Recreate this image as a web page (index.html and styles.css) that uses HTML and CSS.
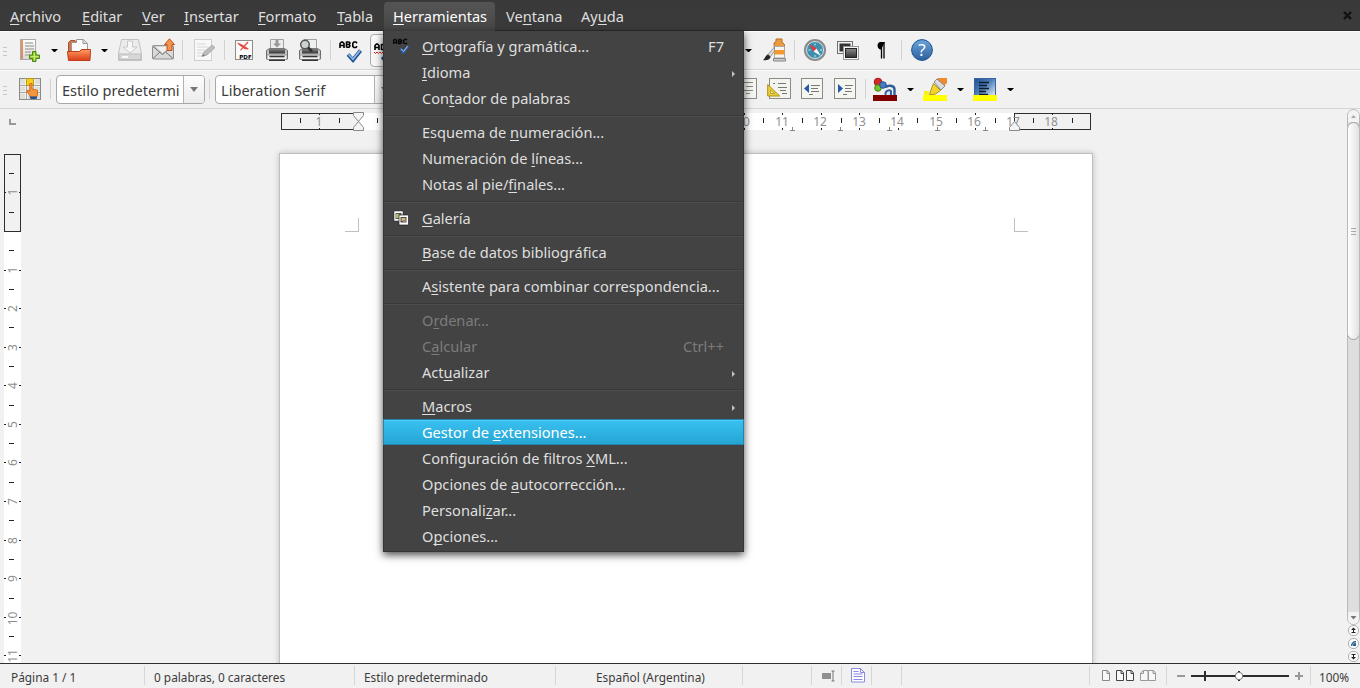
FILE: index.html
```html
<!DOCTYPE html>
<html lang="es">
<head>
<meta charset="utf-8">
<title>Writer</title>
<link rel="stylesheet" href="styles.css">
</head>
<body>
<nav class="menubar">
  <span class="menu m1"><u>A</u>rchivo</span>
  <span class="menu m2"><u>E</u>ditar</span>
  <span class="menu m3"><u>V</u>er</span>
  <span class="menu m4"><u>I</u>nsertar</span>
  <span class="menu m5"><u>F</u>ormato</span>
  <span class="menu m6"><u>T</u>abla</span>
  <div class="menu open"><u>H</u>erramientas
    <div class="popup">
      <div class="item">
        <svg class="mi" width="16" height="16" viewBox="0 0 16 16"><path d="M.5 6V2.500l1-1h1l1 1V6M.5 4.500h3M5.500 1.500V6M5.500 1.500h2l1 1-1 1h-2M7.500 3.500l1 1-1 1h-2M14 2l-.5-.5h-2l-1 1v2l1 1h2l.5-.5" fill="none" stroke="#080808" stroke-width="1.400"/><path d="M7.500 11l3 3.200 4.500-6" fill="none" stroke="#2d5fab" stroke-width="2.600"/><path d="M8 10.800l2.600 2.600 4-5.200" fill="none" stroke="#a9c7ee" stroke-width="1"/></svg>
        <span><u>O</u>rtografía y gramática...</span><kbd>F7</kbd></div>
      <div class="item sub"><span><u>I</u>dioma</span></div>
      <div class="item"><span>Con<u>t</u>ador de palabras</span></div>
      <hr>
      <div class="item"><span>Esquema de <u>n</u>umeración...</span></div>
      <div class="item"><span>Numeración de <u>l</u>íneas...</span></div>
      <div class="item"><span>Notas al pie/<u>f</u>inales...</span></div>
      <hr>
      <div class="item">
        <svg class="mi" width="16" height="16" viewBox="0 0 16 16"><rect x="1" y="1" width="9" height="10" fill="#fff" stroke="#222" stroke-width=".5"/><path d="M2.500 3h6v6h-6z" fill="#55564a"/><path d="M3 4h3v4H3z" fill="#bdb777"/><rect x="6" y="5" width="9.500" height="10" fill="#fff" stroke="#222" stroke-width=".7"/><path d="M7.500 7h6v5.500h-6z" fill="#484848"/><path d="M8.500 8h4v3h-4z" fill="#c9b96e"/><path d="M10 10h3v2h-3z" fill="#a58072"/></svg>
        <span><u>G</u>alería</span></div>
      <hr>
      <div class="item"><span><u>B</u>ase de datos bibliográfica</span></div>
      <hr>
      <div class="item"><span>A<u>s</u>istente para combinar correspondencia...</span></div>
      <hr>
      <div class="item off"><span>O<u>r</u>denar...</span></div>
      <div class="item off"><span>C<u>a</u>lcular</span><kbd>Ctrl++</kbd></div>
      <div class="item sub"><span>Act<u>u</u>alizar</span></div>
      <hr>
      <div class="item sub"><span><u>M</u>acros</span></div>
      <div class="item hot"><span>Gestor de <u>e</u>xtensiones...</span></div>
      <div class="item"><span>Configuración de filtros <u>X</u>ML...</span></div>
      <div class="item"><span>Opciones de <u>a</u>utocorrección...</span></div>
      <div class="item"><span>Personali<u>z</u>ar...</span></div>
      <div class="item"><span>O<u>p</u>ciones...</span></div>
    </div>
  </div>
  <span class="menu m7">Ve<u>n</u>tana</span>
  <span class="menu">Ay<u>u</u>da</span>
  <svg class="close" width="9" height="9" viewBox="0 0 9 9"><path d="M1 1l7 7M8 1L1 8" stroke="#111" stroke-width="2.400"/></svg>
</nav>

<svg width="0" height="0" class="defs">
  <defs>
    <linearGradient id="paper" x2="0" y2="1"><stop offset="0" stop-color="#fff"/><stop offset="1" stop-color="#d8d8d4"/></linearGradient>
    <linearGradient id="orange" x2="0" y2="1"><stop offset="0" stop-color="#fba06a"/><stop offset=".5" stop-color="#ee6c3a"/><stop offset="1" stop-color="#d8401c"/></linearGradient>
    <linearGradient id="steel" x2="0" y2="1"><stop offset="0" stop-color="#8b8b8b"/><stop offset="1" stop-color="#333"/></linearGradient>
    <linearGradient id="blue" x2="0" y2="1"><stop offset="0" stop-color="#6ba5d8"/><stop offset="1" stop-color="#2b5f9e"/></linearGradient>
    <linearGradient id="fade" x2="1" y2="1"><stop offset="0" stop-color="#1f4f94"/><stop offset=".45" stop-color="#4d7fb8"/><stop offset="1" stop-color="#fff"/></linearGradient>
  </defs>
</svg>

<div class="toolbar">
  <div class="left">
    <i class="grip"></i>
    <svg class="ic" viewBox="0 0 24 24"><rect x="2.500" y="1.500" width="15" height="20" fill="url(#paper)" stroke="#aaa9a4"/><path d="M3 2h2v19H3z" fill="#e0703a" opacity=".75"/><path d="M7 5h8M7 8h9M7 11h9M7 14h6M7 17h5" stroke="#b0b0ac" stroke-width="1.500"/><path d="M14.500 13.500h3.500v3.500H21.500v3.500h-3.500v3h-3.500v-3H11.500v-3.500h3z" fill="#8bc926" stroke="#4a8511"/><path d="M16.300 15v7.500M12.500 18.700h8" stroke="#d2ef84" stroke-width="1"/></svg>
    <i class="drop near"></i>
    <svg class="ic" viewBox="0 0 24 24"><path d="M1.500 21V4.500l2-2H8l2 3h8V21z" fill="#d77044" stroke="#a9552f"/><path d="M4.500 14V4.500h5V1.500h7l4 4V14z" fill="#fafafa" stroke="#999"/><path d="M16 1.500v4h4" fill="#ddd" stroke="#999"/><path d="M.5 13.500h12l2-2h9l-.5 11H1.500z" fill="url(#orange)" stroke="#bd3e1a"/></svg>
    <i class="drop wide"></i>
    <svg class="ic" viewBox="0 0 24 24"><path d="M3.500 1.500h17l3 14v7H.5v-7z" fill="#ececec" stroke="#c3c3c3"/><path d="M1 16h22v5.500H1z" fill="#d7d7d7" stroke="#bdbdbd"/><path d="M9.500 3h5v6H19l-7 6-7-6h4.500z" fill="#f7f7f7" stroke="#c8c8c8"/><path d="M4 19h6" stroke="#f8f8f8" stroke-width="2"/></svg>
    <svg class="ic" viewBox="0 0 24 24"><rect x="1.500" y="7.500" width="21" height="13.500" rx="1" fill="#d9d9d7" stroke="#8e8e8c"/><path d="M2 8.500l9.500 8 10-8M2 20.500l7-6.500M22 20.500l-7.500-6.500" fill="none" stroke="#777"/><path d="M3 8h18l-9.500 7.500z" fill="#f0f0ef" stroke="#a5a5a3" stroke-width=".7"/><path d="M18.500.8l5 5.700H21v6h-5v-6h-2.500z" fill="#f39350" stroke="#c4521f"/></svg>
    <i class="sep a"></i>
    <svg class="ic" viewBox="0 0 24 24"><rect x="2.500" y="1.500" width="17" height="21" fill="#f8f8f8" stroke="#cfcfcf"/><path d="M5 6h9M5 9h11M5 12h8M5 15h6M5 18h7" stroke="#d6d6d6"/><path d="M10 18.500l2-4.500 8-7 3 2.500-8 7.500z" fill="#bcbcbc" stroke="#a4a4a4" stroke-width=".8"/><path d="M10 18.500l1-2.500 2 1.500z" fill="#777"/></svg>
    <i class="sep"></i>
    <svg class="ic" viewBox="0 0 24 24"><rect x="3.500" y="2.500" width="17" height="19" fill="#fafafa" stroke="#8d8d8b"/><path d="M5 4.500c5 1.500 9 4 12 6.500-1 .8-3 .4-4.500 0C10 9 6 7 5 4.500zM15.500 3.500l1 1-7.500 8-1-.5z" fill="#e12a25" opacity=".85"/><rect x="7" y="14" width="12.500" height="7" fill="#fff"/><text x="7.300" y="20.500" class="pdf">PDF</text></svg>
    <svg class="ic" viewBox="0 0 24 24"><path d="M5.500 11V1.500h13V11z" fill="#eee" stroke="#a1a1a0"/><path d="M10.500 2h3v3.500H16l-4 4-4-4h2.500z" fill="#999"/><path d="M1.500 12.500l3-2h15l3 2V21h-21z" fill="#c4c4c2" stroke="#686866"/><path d="M4 10.500h16v5H4z" fill="url(#steel)"/><path d="M2 17h20v4.500H2z" fill="#eee" stroke="#888" stroke-width=".7"/><path d="M4.500 18.500h15M4 22.300h16" stroke="#333" stroke-width="1.500"/></svg>
    <svg class="ic" viewBox="0 0 24 24"><path d="M6.500 11V1.500h12V11z" fill="#eee" stroke="#a1a1a0"/><path d="M1.500 12.500l3-2h15l3 2V21h-21z" fill="#c4c4c2" stroke="#686866"/><path d="M4 10.500h16v5H4z" fill="url(#steel)"/><path d="M2 17h20v4.500H2z" fill="#eee" stroke="#888" stroke-width=".7"/><path d="M4.500 18.500h15M4 22.300h16" stroke="#333" stroke-width="1.500"/><circle cx="7" cy="6.500" r="4.300" fill="#ccd1d2" stroke="#555" stroke-width="1.500"/><path d="M10 9.500l4 4" stroke="#333" stroke-width="2.600"/></svg>
    <i class="sep"></i>
    <svg class="ic" viewBox="0 0 24 24"><path d="M2 10V5.500L3.500 4h1L6 5.500V10M2 7.500h4M8.500 3.500v6M8.500 4H11l1 1-1 1.500H8.500M11 6.500l1 1.200L11 9.300H8.500M19 5.200L18 4h-2l-1.200 1.300v3L16 9.500h2l1-1.200" fill="none" stroke="#000" stroke-width="1.600"/><path d="M10 16.500l5 5.500 7.500-9.500" fill="none" stroke="#235394" stroke-width="3.800"/><path d="M10.500 16.500l4.500 4.700 7-8.700" fill="none" stroke="#8db8e8" stroke-width="1.700"/></svg>
    <span class="pressed"><svg width="24" height="24" viewBox="0 0 24 24"><path d="M1 8V3.500L2.500 2h1L5 3.500V8M1 5.500h4M7.500 2v6M7.500 2.500H10v5H7.500" fill="none" stroke="#000" stroke-width="1.600"/><path d="M0 10l1.500 1.500L3 10l1.500 1.500L6 10l1.500 1.500L9 10" fill="none" stroke="#d22"/><path d="M8 15l4 5" stroke="#235394" stroke-width="3"/></svg></span>
  </div>
  <div class="right">
    <i class="drop first"></i>
    <svg class="ic" viewBox="0 0 24 24"><path d="M12 5l2-1.500V1h6v3l2.500 2.500V12h-10z" fill="#eb9b3d" stroke="#b86a21"/><path d="M12.500 8.500h10V20h-10z" fill="#f7f5f0" stroke="#aaa"/><path d="M12.500 12h10v4.500h-10z" fill="#f29a2e"/><path d="M11.500 20.500h12v2.500h-12z" fill="#ccc" stroke="#888"/><path d="M12.500 9L6 16.500l2.500 2 4-5.500z" fill="#ddd" stroke="#888" stroke-width=".8"/><path d="M1 22c2-1 2.500-5 5-5.500L8.700 19C8 21.500 4 23 1 22z" fill="#252525"/></svg>
    <i class="sep r"></i>
    <svg class="ic" viewBox="0 0 24 24"><circle cx="12" cy="12" r="10" fill="#3e8fae" stroke="#8c8c8b" stroke-width="2.200"/><circle cx="12" cy="12" r="8.500" fill="none" stroke="#d7e5e9" stroke-width="1"/><path d="M12 5.500v2M12 17v2M5.500 12h2M17 12h2" stroke="#a7d5e3" stroke-width="1.300"/><path d="M6 6l7.500 4.500-3 3z" fill="#e33"/><path d="M18 18l-7.500-4.500 3-3z" fill="#f5f5f5"/></svg>
    <svg class="ic" viewBox="0 0 24 24"><rect x="1.500" y="3.500" width="15" height="12" fill="#f3f3f2" stroke="#6f6f6e"/><rect x="3.500" y="5.500" width="11" height="8" fill="#333"/><rect x="7.500" y="8.500" width="15" height="13" fill="#f5f5f3" stroke="#999"/><rect x="9.500" y="10.500" width="11" height="9" fill="url(#steel)" stroke="#222"/></svg>
    <svg class="ic" viewBox="0 0 24 24"><path d="M15 4.500v16M12.500 5v15.500" stroke="#000" stroke-width="1.300"/><path d="M16 4h-4.500C7.500 4 7.500 11.500 12 11.500z" fill="#000"/></svg>
    <i class="sep r"></i>
    <svg class="ic" viewBox="0 0 24 24"><circle cx="12" cy="12" r="10.400" fill="url(#blue)" stroke="#1e5290"/><text x="12" y="18" class="help">?</text></svg>
  </div>
</div>

<div class="toolbar second">
  <div class="left">
    <i class="grip"></i>
    <svg class="ic" viewBox="0 0 24 24"><rect x="1.500" y="1.500" width="21" height="21" fill="#dededa" stroke="#8b8b87"/><path d="M8.500 2v20M15.500 2v20M2 8.500h20M2 15.500h20" stroke="#fff" stroke-width="2.200"/><path d="M8.500 2v20M15.500 2v20M2 8.500h20M2 15.500h20" stroke="#8b8b87" stroke-width=".8"/><path d="M8.500 1.500h7v7h-7z" fill="#f6cf1c" stroke="#b79a1c"/><path d="M11.500 18l-3-4 1.500-1 1.800 1.500V6.500h2.200V12l5.500 1.300V18l-1.500 2h-5.500z" fill="#f6963c" stroke="#d86c14"/><path d="M11.500 19.500h8l-1 2.500h-6z" fill="#25538f"/></svg>
    <i class="sep c"></i>
    <span class="combo"><span>Estilo predetermi</span><b></b></span>
    <i class="sep d"></i>
    <span class="combo font"><span>Liberation Serif</span><b></b></span>
  </div>
  <div class="right low">
    <svg class="ic" viewBox="0 0 24 24"><rect x="1.500" y="1.500" width="21" height="20" fill="#f5f5f2" stroke="#8b8d85"/><path d="M8 5.500h11M12 9.500h7M8 13.500h11M12 16.500h4" stroke="#888a82"/></svg>
    <svg class="ic" viewBox="0 0 24 24"><rect x="2.500" y="1.500" width="21" height="20" fill="#f3f3ef" stroke="#8b8d85"/><path d="M11 6.500h8M11 10.500h9M13 13.500h6M15 16.500h5M6 6.500h2" stroke="#777970"/><path d="M.7 7.500v11.500h12z" fill="#e9cf3d" stroke="#b08f12"/><path d="M3.500 13v3.500h4z" fill="#faf5d5" stroke="#b08f12" stroke-width=".8"/></svg>
    <svg class="ic" viewBox="0 0 24 24"><rect x="1.500" y="1.500" width="21" height="20" fill="#f5f5f2" stroke="#8b8d85"/><path d="M9 7v9l-5-4.500z" fill="#2558a6"/><path d="M11 8.500h9M11 11.500h7M11 14.500h8M9 17.500h4" stroke="#777970"/></svg>
    <svg class="ic" viewBox="0 0 24 24"><rect x="1.500" y="1.500" width="21" height="20" fill="#f5f5f2" stroke="#8b8d85"/><path d="M5 7v9l5-4.500z" fill="#2558a6"/><path d="M12 8.500h8M12 11.500h6M12 14.500h7M10 17.500h4" stroke="#777970"/></svg>
    <i class="sep"></i>
    <svg class="ic" viewBox="0 0 24 24"><circle cx="5" cy="5" r="3.800" fill="#d22b2b" stroke="#a11"/><circle cx="5" cy="11" r="3.300" fill="#73c62c" stroke="#3d8a12"/><circle cx="10" cy="8" r="3.300" fill="#4a7bbc" stroke="#28548f"/><path d="M12.500 10.500c2-2.500 8.500-2.500 9 1.500V18" fill="none" stroke="#315f9e" stroke-width="2.400"/><path d="M18 18v-3.500c0-2-5-1.500-5.500 1.500-.2 1 0 1.500.5 2" fill="#d7e5f5" stroke="#315f9e" stroke-width="2"/><path d="M0 18h24v6H0z" fill="#800000"/></svg>
    <i class="drop"></i>
    <svg class="ic" viewBox="0 0 24 24"><path d="M15 1h9v5l-5 5-7-7z" fill="#f08a31"/><path d="M11 5l3-3 8 7-4 4z" fill="#ddd" stroke="#888"/><path d="M10.500 6.500l7 7-5 3.500-6 1 1.500-5z" fill="#f3d32d" stroke="#b09117"/><path d="M1 14h5v4H1z" fill="#f7ef18"/><path d="M0 18h24v6H0z" fill="#ff0"/></svg>
    <i class="drop"></i>
    <svg class="ic" viewBox="0 0 24 24"><rect x="1.500" y="1.500" width="21" height="20" fill="url(#fade)" stroke="#3564a0"/><path d="M6 5.500h10M6 8.500h8M6 11.500h10M6 14.500h7M6 17.500h9" stroke="#101c2d" stroke-width="1.300"/><path d="M0 18h24v6H0z" fill="#ff0"/></svg>
    <i class="drop"></i>
  </div>
</div>

<main class="work">
  <div class="vcol">
    <svg class="corner" width="7" height="6" viewBox="0 0 7 6"><path d="M1 0v5h6" fill="none" stroke="#999" stroke-width="2"/></svg>
    <svg class="vruler" width="17" height="509" viewBox="4 154 17 509">
      <path d="M4 232h17v431H4z" fill="#fff"/>
      <path d="M4.500 154.500h16v77h-16z" fill="#f1f1f1" stroke="#2d2d2d" shape-rendering="crispEdges"/>
      <path class="tick" d="M9 173.500h5M9 212.500h5M9 250.500h5M9 289.500h5M9 327.500h5M9 366.500h5M9 405.500h5M9 443.500h5M9 482.500h5M9 520.500h5M9 559.500h5M9 598.500h5M9 636.500h5"/>
      <path class="tick" d="M4 192.500h2M19 192.500h2M4 270.500h2M19 270.500h2M4 308.500h2M19 308.500h2M4 347.500h2M19 347.500h2M4 385.500h2M19 385.500h2M4 424.500h2M19 424.500h2M4 462.500h2M19 462.500h2M4 501.500h2M19 501.500h2M4 540.500h2M19 540.500h2M4 578.500h2M19 578.500h2M4 617.500h2M19 617.500h2M4 655.500h2M19 655.500h2"/>
      <g class="num">
        <text transform="translate(17 192)rotate(-90)">1</text><text transform="translate(17 270)rotate(-90)">1</text><text transform="translate(17 308.500)rotate(-90)">2</text><text transform="translate(17 347.500)rotate(-90)">3</text><text transform="translate(17 385.500)rotate(-90)">4</text><text transform="translate(17 424.500)rotate(-90)">5</text><text transform="translate(17 462.500)rotate(-90)">6</text><text transform="translate(17 501.500)rotate(-90)">7</text><text transform="translate(17 540.500)rotate(-90)">8</text><text transform="translate(17 578.500)rotate(-90)">9</text><text transform="translate(17 618.500)rotate(-90)">10</text><text transform="translate(17 656)rotate(-90)">11</text>
      </g>
    </svg>
  </div>
  <div class="canvas">
    <svg class="hruler" width="812" height="24" viewBox="280 110 812 24">
      <path d="M358 113h656v17H358z" fill="#fff"/>
      <path d="M281.500 113.500h77v16h-77zM1014.500 113.500h76v16h-76z" fill="#f1f1f1" stroke="#2d2d2d" shape-rendering="crispEdges"/>
      <path class="tick" d="M300.500 118v5M339.500 118v5M377.500 118v5M763.500 118v5M802.500 118v5M841.500 118v5M879.500 118v5M917.500 118v5M956.500 118v5M995.500 118v5M1033.500 118v5M1072.500 118v5"/>
      <path class="tick" d="M319.500 113v2M319.500 128v2M744.500 113v2M744.500 128v2M782.500 113v2M782.500 128v2M821.500 113v2M821.500 128v2M859.500 113v2M859.500 128v2M898.500 113v2M898.500 128v2M937.500 113v2M937.500 128v2M975.500 113v2M975.500 128v2M1052.500 113v2M1052.500 128v2"/>
      <path d="M790 130.500h5M792.500 127v3M838 130.500h5M840.500 127v3M887 130.500h5M889.500 127v3M935 130.500h5M937.500 127v3M983 130.500h5M985.500 127v3" stroke="#888" shape-rendering="crispEdges"/>
      <g class="num"><text x="319" y="126">1</text><text x="743" y="126">10</text><text x="782" y="126">11</text><text x="820" y="126">12</text><text x="859" y="126">13</text><text x="897" y="126">14</text><text x="936" y="126">15</text><text x="974" y="126">16</text><text x="1013" y="126">17</text><text x="1051" y="126">18</text></g>
      <path d="M353.500 112.500h10v3l-5 6-5-6zM358.500 121.500l5 6v3h-10v-3zM1014.500 121.500l5 6v3h-10v-3z" fill="#f4f4f4" stroke="#888"/>
    </svg>
    <div class="page"><i class="crop tl"></i><i class="crop tr"></i></div>
  </div>
  <div class="scroll">
    <div class="track">
      <svg width="11" height="12" viewBox="0 0 11 12"><path d="M5.500 5l2.500 3H3z" fill="#aaa"/></svg>
      <div class="thumb"><i></i><i></i><i></i></div>
      <svg class="end" width="11" height="12" viewBox="0 0 11 12"><path d="M5.500 7.500L8.500 4h-6z" fill="#777"/></svg>
    </div>
    <span class="nav"><svg width="9" height="9" viewBox="0 0 9 9"><path d="M4.500 1.500L7 4H2zM4 4h1v3H4zM2.500 6h4v1h-4z" fill="#222"/></svg></span>
    <span class="nav"><svg width="9" height="9" viewBox="0 0 9 9"><path d="M2 7c0-3 2-5 5-5v5z" fill="#2c5c85"/><path d="M3.500 7c0-2 1.500-3.500 3.500-3.500" stroke="#9bc4e0" fill="none"/></svg></span>
    <span class="nav"><svg width="9" height="9" viewBox="0 0 9 9"><path d="M4.500 7.500L7 5H2zM4 2h1v3H4zM2.500 2h4v1h-4z" fill="#222"/></svg></span>
  </div>
</main>

<footer class="status">
  <span class="cell c1">Página 1 / 1</span>
  <span class="cell c2">0 palabras, 0 caracteres</span>
  <span class="cell c3">Estilo predeterminado</span>
  <span class="cell c4">Español (Argentina)</span>
  <span class="cell c5"></span>
  <span class="cell c6 ins"><svg width="13" height="12" viewBox="0 0 13 12"><path d="M0 3h9v6H0z" fill="#8f8f8f"/><path d="M9.500 1h3M9.500 11h3M11 1v10" stroke="#777"/></svg></span>
  <span class="cell c6"><svg width="15" height="15" viewBox="0 0 15 15"><path d="M.5.5h9l4 4v9.500H.5zM9.500.5v4h4" fill="#fdfdff" stroke="#8b8be0"/><path d="M2.500 3.500h5M2.500 6h9M2.500 8.500h9M2.500 11.500h9" stroke="#8b8be0"/></svg></span>
  <span class="cell c7"></span>
  <span class="cell c8"></span>
  <span class="cell views">
    <svg width="55" height="11" viewBox="0 0 55 11" fill="#f8f8f8"><path d="M.5.500h5l2 2.500v7.500h-7zM5 .5V3.500h3" stroke="#888"/><path d="M14.500.500h5l2 2.500v7.500h-7zM19 .5V3.500h3M24.500.5h5l2 2.500v7.500h-7zM29 .5V3.500h3" stroke="#444"/><path d="M41.500.5h4.500v10h-7.500V3zM41.500.5V3.500h-3M46.500.5h5l2 2.500v7.500h-7zM51 .5V3.500h3" stroke="#999"/></svg>
  </span>
  <span class="cell zoom">
    <svg width="127" height="14" viewBox="0 0 127 14"><path d="M1 7h8" stroke="#999" stroke-width="2"/><path d="M15 7h98" stroke="#2c2c2c" stroke-width="2"/><path d="M29 2v10M63 2v10" stroke="#2c2c2c" stroke-width="2"/><circle cx="63" cy="7" r="3.700" fill="#fff" stroke="#777"/><path d="M119 7h8M123 3v8" stroke="#999" stroke-width="2"/></svg>
  </span>
  <span class="cell pct">100%</span>
</footer>
</body>
</html>
```
FILE: styles.css
```css
* { box-sizing: border-box; }
body {
  margin: 0; width: 1360px; height: 688px; overflow: hidden;
  display: flex; flex-direction: column;
  background: #f1f1f1; color: #3c3c3c;
  font: 14.6px/26px "Noto Sans", sans-serif;
}
svg { flex: none; display: block; }
.defs { position: absolute; }
u { text-decoration: underline 1px; text-underline-offset: 2px; text-decoration-skip-ink: none; }

.menubar {
  flex: none; height: 31px; display: flex; color: #dfdfdf; white-space: nowrap;
  background: linear-gradient(#393939, #3b3b3b); border-bottom: 1px solid #2c2c2c;
}
.menu { padding: 3px 0 0 10px; flex: none; }
.m1 { width: 72px; }
.m2 { width: 60px; }
.m3 { width: 42px; }
.m4 { width: 74px; }
.m5 { width: 79px; }
.m6 { width: 57px; }
.m7 { width: 75px; }
.menu.open {
  position: relative; margin: 2px 1px 0 0; padding: 1px 0 0 9px; width: 111px; height: 29px;
  background: linear-gradient(#555, #454545); border-radius: 4px 4px 0 0; color: #fff;
}
.close { margin: 11px 8px 0 auto; }
.popup {
  position: absolute; z-index: 5; left: -1px; top: 29px; width: 361px; height: 521px;
  padding: 2px 0; background: #434343; color: #dfdfdf;
  box-shadow: inset 1px 0 #353535, inset -1px -1px #353535, 0 3px 8px rgba(0,0,0,.7);
}
.item { position: relative; height: 26px; padding: 0 20px 0 39px; display: flex; justify-content: space-between; }
.item kbd { font: inherit; }
.mi { position: absolute; left: 10px; top: 5px; }
.item.off { color: #7c7c7c; }
.item.sub::after { content: ""; align-self: center; margin: 3px -11px 0 0; border: 3px solid transparent; border-left-color: #c4c4c4; border-right: 0; }
.item.hot {
  color: #fff; background: linear-gradient(#39c1f1, #25a5d4);
  border: 1px solid #2385ad; padding-left: 38px; line-height: 25px; box-shadow: inset 0 1px #4acdf8;
}
.popup hr { margin: 4px 1px 2px; border: 0; border-top: 1px solid #393939; border-bottom: 1px solid #4d4d4d; height: 2px; }

.toolbar { flex: none; height: 39px; display: flex; border-bottom: 1px solid #d4d4d4; box-shadow: inset 0 1px #fbfbfb; }
.left { width: 383px; overflow: hidden; display: flex; align-items: center; flex: none; }
.right { margin-left: 357px; display: flex; align-items: center; }
.right.low { margin-left: 347px; }
.grip { flex: none; width: 4px; height: 9px; margin: 3px 6px 0 3px; background: repeating-linear-gradient(#c6c6c6 0 1px, transparent 1px 4px); }
.ic { width: 24px; height: 24px; margin: 0 5px 0 4px; overflow: visible; }
.grip + .ic { margin-left: 5px; }
.drop { flex: none; width: 7px; border: 3px solid transparent; border-top-color: #000; border-bottom: 0; margin: 0 5px; }
.drop.near { margin-left: 4px; }
.drop.wide { margin-right: 6px; }
.drop.first { margin-right: 6px; }
.sep { flex: none; width: 1px; height: 20px; background: #d2d2d2; margin: 0 3px; }
.sep.a { margin: 0 5px 0 2px; }
.sep.r { margin-right: 4px; }
.sep.c { margin-right: 5px; }
.sep.d { margin: 0 5px 0 4px; }
.pressed { flex: none; width: 32px; height: 33px; padding: 7px 4px 0 3px; border: 1px solid #aaa; border-radius: 4px; background: #f9f9f9; margin-left: 3px; }
.combo { flex: none; display: flex; height: 29px; width: 149px; border: 1px solid #a8a8a8; border-radius: 4px; background: #fff; overflow: hidden; white-space: nowrap; margin-top: 1px; }
.combo span { width: 127px; padding-left: 5px; line-height: 28px; border-right: 1px solid #b4b4b4; overflow: hidden; }
.combo b { flex: 1; background: linear-gradient(#fdfdfd, #ececec); display: flex; align-items: center; justify-content: center; }
.combo b::after { content: ""; border: 4px solid transparent; border-top: 5px solid #777; border-bottom: 0; }
.combo.font { width: 180px; }
.combo.font span { width: 159px; flex: none; }
.pdf { font: bold 5.5px "DejaVu Sans", sans-serif; }
.help { font: 17px "Noto Sans", sans-serif; fill: #fff; text-anchor: middle; }

.work { flex: 1; min-height: 0; display: flex; overflow: hidden; }
.vcol { width: 280px; padding: 10px 0 0 4px; flex: none; }
.corner { margin: 0 0 29px 5px; }
.tick { stroke: #222; shape-rendering: crispEdges; fill: none; }
.num { font: 12px "Noto Sans", sans-serif; fill: #8f8f8f; text-anchor: middle; }
.canvas { width: 813px; flex: none; padding-top: 1px; }
.hruler { margin-bottom: 19px; }
.page {
  height: 520px; margin-left: -1px; width: 814px; padding: 64px 64px 0 65px; display: flex; justify-content: space-between;
  background: #fff; border: 1px solid #bfbfbf; box-shadow: 0 0 6px rgba(0,0,0,.22);
}
.crop { width: 14px; height: 14px; border-bottom: 1px solid #c0c0c0; }
.crop.tl { border-right: 1px solid #c0c0c0; }
.crop.tr { border-left: 1px solid #c0c0c0; }
.scroll { margin-left: auto; width: 13px; }
.track { height: 516px; border: 1px solid #b9b9b9; border-radius: 7px; background: #dedede; display: flex; flex-direction: column; justify-content: space-between; overflow: hidden; }
.track svg { background: #f3f3f3; }
.thumb { height: 218px; margin: 0 -1px auto; border: 1px solid #a2a2a2; border-radius: 7px; background: linear-gradient(90deg, #fff, #e2e2e2); display: flex; flex-direction: column; justify-content: center; align-items: center; gap: 2px; }
.thumb i { width: 5px; height: 1px; background: #aaa; }
.nav { display: flex; align-items: center; justify-content: center; width: 11px; height: 11px; margin: 0 1px 2px; border: 1px solid #b0b0b0; border-radius: 5px; background: #fafafa; }
.track + .nav { margin-top: 0; }

.status { flex: none; height: 25px; border-top: 1px solid #2f2f2f; display: flex; font-size: 11.85px; white-space: nowrap; }
.cell { flex: none; border-right: 1px solid #d6d6d6; height: 19px; margin-top: 2px; line-height: 23px; padding-left: 9px; display: flex; align-items: center; }
.c1, .c2, .c3, .c4, .pct { align-items: flex-start; }
.c1 { width: 145px; padding-left: 11px; }
.c2 { width: 210px; }
.c3 { width: 201px; }
.c4 { width: 187px; padding-left: 40px; }
.c5 { width: 69px; }
.c6 { width: 30px; }
.c6.ins { padding-left: 10px; }
.c7 { width: 30px; }
.c8 { width: 188px; }
.views { width: 77px; padding-left: 12px; }
.zoom { width: 144px; padding-left: 9px; }
.pct { border: 0; padding-left: 8px; }
```
